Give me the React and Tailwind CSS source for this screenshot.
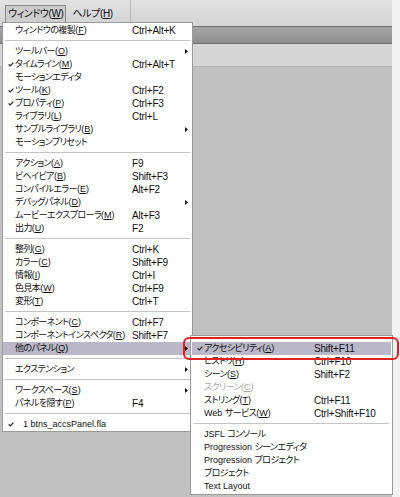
import React from 'react';

const mainGroups = [
  [{ label: 'ウィンドウの複製', k: 'F', sc: 'Ctrl+Alt+K' }],
  [
    { label: 'ツールバー', k: 'O', arrow: true },
    { label: 'タイムライン', k: 'M', sc: 'Ctrl+Alt+T', check: true },
    { label: 'モーションエディタ' },
    { label: 'ツール', k: 'K', sc: 'Ctrl+F2', check: true },
    { label: 'プロパティ', k: 'P', sc: 'Ctrl+F3', check: true },
    { label: 'ライブラリ', k: 'L', sc: 'Ctrl+L' },
    { label: 'サンプルライブラリ', k: 'B', arrow: true },
    { label: 'モーションプリセット' },
  ],
  [
    { label: 'アクション', k: 'A', sc: 'F9' },
    { label: 'ビヘイビア', k: 'B', sc: 'Shift+F3' },
    { label: 'コンパイルエラー', k: 'E', sc: 'Alt+F2' },
    { label: 'デバッグパネル', k: 'D', arrow: true },
    { label: 'ムービーエクスプローラ', k: 'M', sc: 'Alt+F3' },
    { label: '出力', k: 'U', sc: 'F2' },
  ],
  [
    { label: '整列', k: 'G', sc: 'Ctrl+K' },
    { label: 'カラー', k: 'C', sc: 'Shift+F9' },
    { label: '情報', k: 'I', sc: 'Ctrl+I' },
    { label: '色見本', k: 'W', sc: 'Ctrl+F9' },
    { label: '変形', k: 'T', sc: 'Ctrl+T' },
  ],
  [
    { label: 'コンポーネント', k: 'C', sc: 'Ctrl+F7' },
    { label: 'コンポーネントインスペクタ', k: 'R', sc: 'Shift+F7' },
    { label: '他のパネル', k: 'Q', arrow: true, active: true },
  ],
  [{ label: 'エクステンション', arrow: true }],
  [
    { label: 'ワークスペース', k: 'S', arrow: true },
    { label: 'パネルを隠す', k: 'P', sc: 'F4' },
  ],
  [{ label: '1 btns_accsPanel.fla', check: true, indent: true }],
];

const subGroups = [
  [
    { label: 'アクセシビリティ', k: 'A', sc: 'Shift+F11', check: true, active: true },
    { label: 'ヒストリ', k: 'H', sc: 'Ctrl+F10' },
    { label: 'シーン', k: 'S', sc: 'Shift+F2' },
    { label: 'スクリーン', k: 'C', disabled: true },
    { label: 'ストリング', k: 'T', sc: 'Ctrl+F11' },
    { label: 'Web サービス', k: 'W', sc: 'Ctrl+Shift+F10' },
  ],
  [
    { label: 'JSFL コンソール' },
    { label: 'Progression シーンエディタ' },
    { label: 'Progression プロジェクト' },
    { label: 'プロジェクト' },
    { label: 'Text Layout' },
  ],
];

function Check() {
  return (
    <svg width="6" height="5" viewBox="0 0 6 5" className="block">
      <path d="M0.6 2.4 L2.2 4 L5.4 0.6" fill="none" stroke="#222" strokeWidth="1.2" />
    </svg>
  );
}

function Arrow() {
  return (
    <svg width="3" height="5" viewBox="0 0 3 5" className="block">
      <path d="M0 0 L3 2.5 L0 5 Z" fill="#111" />
    </svg>
  );
}

// latin runs keep normal spacing, kana get squeezed
function Runs({ text }) {
  const parts = text.match(/[\x20-\x7e]+|[^\x20-\x7e]+/g) || [];
  return parts.map((p, i) =>
    /^[\x20-\x7e]+$/.test(p) ? (
      <span key={i} className="tracking-normal">{p}</span>
    ) : (
      <span key={i}>{p}</span>
    )
  );
}

function Label({ item }) {
  return (
    <span>
      <Runs text={item.label} />
      {item.k && (
        <span className="tracking-normal">
          (<u className="underline-offset-1">{item.k}</u>)
        </span>
      )}
    </span>
  );
}

function MenuRow({ item, labelW }) {
  return (
    <div
      className={`flex h-[13px] items-center ${item.active ? 'bg-[#b9b7c8]' : ''} ${
        item.disabled ? 'text-[#a9a9a9]' : 'text-[#111]'
      }`}
    >
      <div className="flex w-[12px] shrink-0 justify-end pr-[1px]">{item.check && <Check />}</div>
      <div
        className={`shrink-0 whitespace-nowrap text-[9px] tracking-[-0.6px] ${item.indent ? 'pl-[8px]' : ''}`}
        style={{ width: labelW }}
      >
        <Label item={item} />
      </div>
      <div className="flex-1 whitespace-nowrap tracking-[-0.2px]">{item.sc}</div>
      <div className="flex w-[8px] shrink-0 pl-[1px]">{item.arrow && <Arrow />}</div>
    </div>
  );
}

function Menu({ groups, labelW, className }) {
  return (
    <div className={className}>
      {groups.map((g, i) => (
        <div key={i}>
          {i > 0 && (
            <div className="px-[2px] py-[3px]">
              <div className="h-[2px] border-t border-b border-t-[#c4c4c4] border-b-white" />
            </div>
          )}
          {g.map((item) => (
            <MenuRow key={item.label} item={item} labelW={labelW} />
          ))}
        </div>
      ))}
    </div>
  );
}

export default function App() {
  return (
    <div className="relative h-[497px] w-[400px] overflow-hidden bg-[#c0c0c0] font-['Liberation_Sans','Noto_Sans_CJK_JP',sans-serif] text-[10px] leading-none [font-feature-settings:'palt']">
      <div className="flex h-full">
        <div className="flex flex-1 flex-col">
          {/* menu bar */}
          <div className="flex h-[22px] items-end bg-gradient-to-b from-[#e2e2e2] to-[#d5d5d5] pl-[5px] text-[10px] tracking-[-0.4px] text-[#111]">
            <div className="flex h-[17px] items-center border border-b-0 border-[#8a8a8a] bg-[#cdcdcd] px-[2px]">
              ウィンドウ(<u>W</u>)
            </div>
            <div className="flex h-[17px] items-center px-[6px]">
              ヘルプ(<u>H</u>)
            </div>
            <div className="ml-[11px] h-full w-px bg-[#bcbcbc]" />
          </div>
          <div className="h-[4px] bg-[#d5d5d5]" />
          {/* panel header */}
          <div className="h-[18px] border-y border-[#6f6f6f] bg-gradient-to-b from-[#a6a6a6] to-[#8d8d8d]" />
          <div className="h-[23px] border-b border-[#b4b4b4] bg-[#d5d5d5]" />
          <div className="flex-1 bg-[#c0c0c0]" />
        </div>
        <div className="w-[8px] bg-[#f2f2f2]" />
      </div>

      {/* window menu */}
      <Menu
        groups={mainGroups}
        labelW={117}
        className="absolute left-[2px] top-[22px] w-[191px] border border-[#9a9a9a] bg-white pt-[1px]"
      />

      {/* other panels submenu */}
      <Menu
        groups={subGroups}
        labelW={110}
        className="absolute left-[190px] top-[335px] w-[203px] border border-[#9a9a9a] bg-white px-[1px] pb-[1px] pt-[6px]"
      />

      {/* red annotation */}
      <div className="absolute left-[183px] top-[337px] h-[23px] w-[216px] rounded-[6px] border-2 border-[#e3201e]" />
    </div>
  );
}
